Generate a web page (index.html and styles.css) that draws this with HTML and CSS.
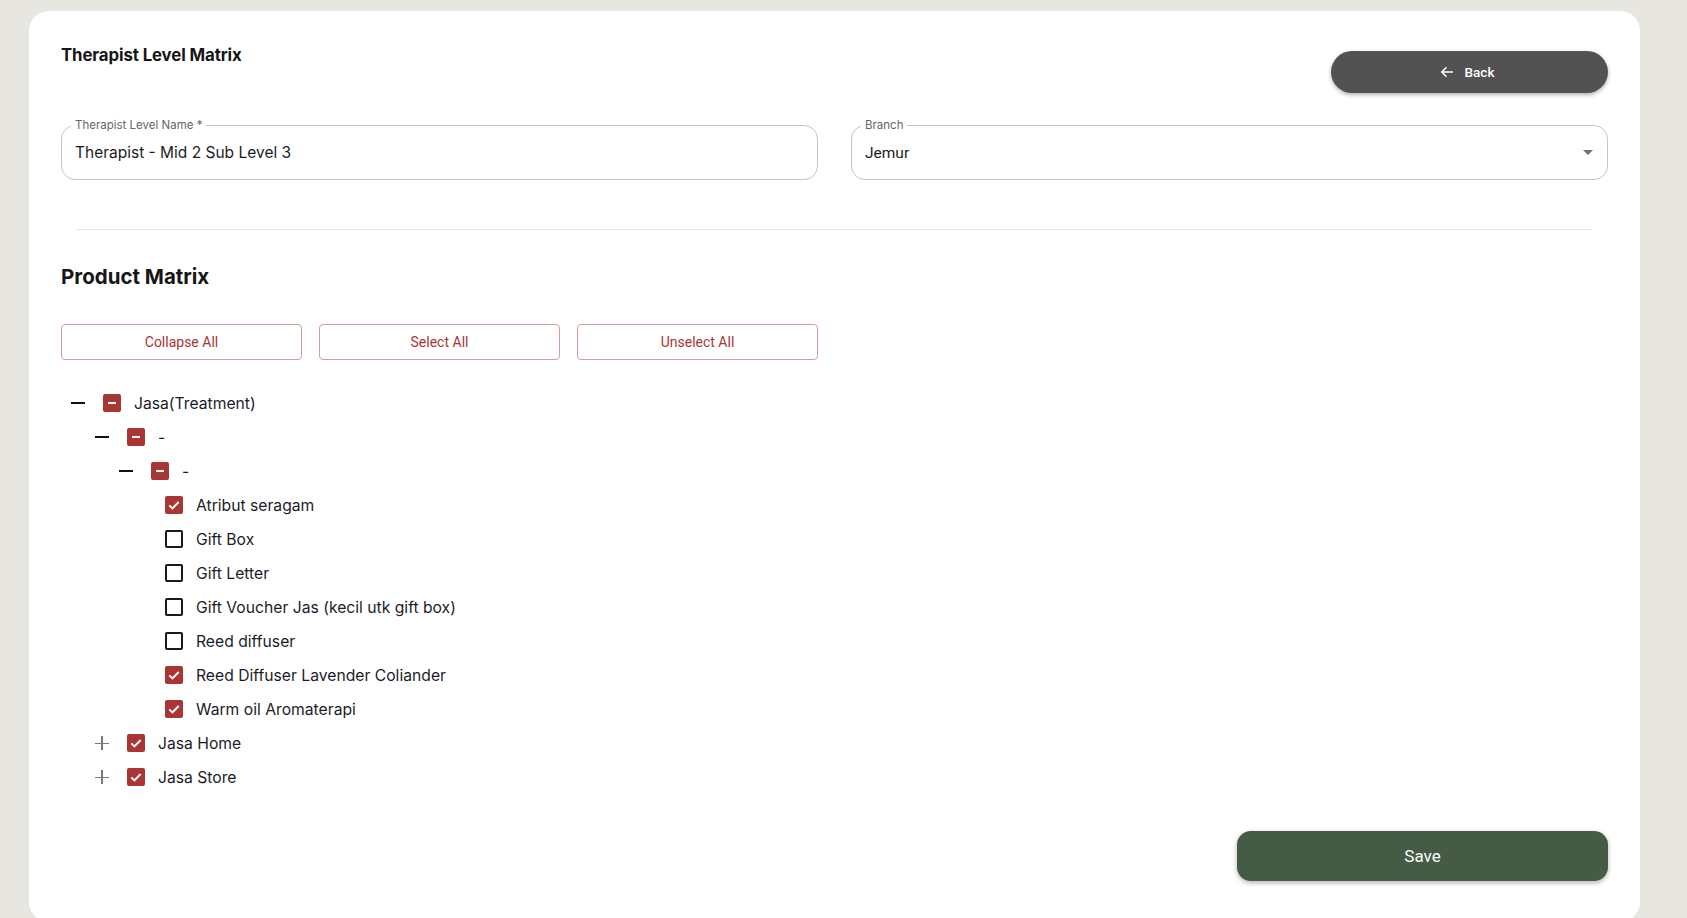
FILE: index.html
```html
<!DOCTYPE html>
<html lang="en">
<head>
    <meta charset="UTF-8">
    <meta name="viewport" content="width=device-width, initial-scale=1.0">
    <title>Therapist Level Matrix</title>
    <link rel="stylesheet" href="styles.css">
</head>
<body>
    <div class="page">
        <div class="card">
            <!-- Header -->
            <div class="header">
                <h1>Therapist Level Matrix</h1>
                <button class="back-btn">
                    <svg width="16" height="16" viewBox="0 0 16 16"><path d="M14 8H3M7.5 3.3L2.8 8l4.7 4.7" fill="none" stroke="#fff" stroke-width="1.5"/></svg>
                    Back
                </button>
            </div>

            <!-- Fields -->
            <div class="fields">
                <div class="field">
                    <label>Therapist Level Name *</label>
                    <span class="value">Therapist - Mid 2 Sub Level 3</span>
                </div>
                <div class="field select">
                    <label>Branch</label>
                    <span class="value">Jemur</span>
                    <span class="caret"></span>
                </div>
            </div>

            <hr class="divider">

            <h2>Product Matrix</h2>

            <div class="actions">
                <button class="outline-btn">Collapse All</button>
                <button class="outline-btn">Select All</button>
                <button class="outline-btn">Unselect All</button>
            </div>

            <!-- Tree -->
            <div class="tree">
                <div class="node lvl-0">
                    <span class="toggle minus"></span>
                    <span class="box partial"></span>
                    <span class="label">Jasa(Treatment)</span>
                </div>
                <div class="node lvl-1">
                    <span class="toggle minus"></span>
                    <span class="box partial"></span>
                    <span class="label">-</span>
                </div>
                <div class="node lvl-2">
                    <span class="toggle minus"></span>
                    <span class="box partial"></span>
                    <span class="label">-</span>
                </div>
                <div class="node leaf">
                    <span class="box checked"><svg width="18" height="18" viewBox="0 0 18 18"><path d="M4.3 9.4l3.1 3 6.3-6.4" fill="none" stroke="#fff" stroke-width="2"/></svg></span>
                    <span class="label">Atribut seragam</span>
                </div>
                <div class="node leaf">
                    <span class="box"></span>
                    <span class="label">Gift Box</span>
                </div>
                <div class="node leaf">
                    <span class="box"></span>
                    <span class="label">Gift Letter</span>
                </div>
                <div class="node leaf">
                    <span class="box"></span>
                    <span class="label">Gift Voucher Jas (kecil utk gift box)</span>
                </div>
                <div class="node leaf">
                    <span class="box"></span>
                    <span class="label">Reed diffuser</span>
                </div>
                <div class="node leaf">
                    <span class="box checked"><svg width="18" height="18" viewBox="0 0 18 18"><path d="M4.3 9.4l3.1 3 6.3-6.4" fill="none" stroke="#fff" stroke-width="2"/></svg></span>
                    <span class="label">Reed Diffuser Lavender Coliander</span>
                </div>
                <div class="node leaf">
                    <span class="box checked"><svg width="18" height="18" viewBox="0 0 18 18"><path d="M4.3 9.4l3.1 3 6.3-6.4" fill="none" stroke="#fff" stroke-width="2"/></svg></span>
                    <span class="label">Warm oil Aromaterapi</span>
                </div>
                <div class="node lvl-1">
                    <span class="toggle plus"></span>
                    <span class="box checked"><svg width="18" height="18" viewBox="0 0 18 18"><path d="M4.3 9.4l3.1 3 6.3-6.4" fill="none" stroke="#fff" stroke-width="2"/></svg></span>
                    <span class="label">Jasa Home</span>
                </div>
                <div class="node lvl-1">
                    <span class="toggle plus"></span>
                    <span class="box checked"><svg width="18" height="18" viewBox="0 0 18 18"><path d="M4.3 9.4l3.1 3 6.3-6.4" fill="none" stroke="#fff" stroke-width="2"/></svg></span>
                    <span class="label">Jasa Store</span>
                </div>
            </div>

            <div class="footer">
                <button class="save-btn">Save</button>
            </div>
        </div>
    </div>
</body>
</html>
```

FILE: styles.css
```css
/* Reset */
* {
    margin: 0;
    padding: 0;
    box-sizing: border-box;
}
body {
    font-family: 'Inter', sans-serif;
    background-color: #e8e6e0;
    color: #1c1c1c;
    height: 918px;
    overflow: hidden;
}
.page {
    padding: 11px 47px 0 29px;
}
.card {
    background-color: #ffffff;
    border-radius: 20px;
    height: 911px;
    padding: 32px 32px 0 32px;
}

/* Header */
.header {
    display: flex;
    justify-content: space-between;
    align-items: flex-start;
}
h1 {
    font-size: 16.8px;
    font-weight: 700;
    line-height: 24px;
    letter-spacing: -0.1px;
    color: #161616;
}
.back-btn {
    margin-top: 8px;
    width: 277px;
    height: 42px;
    border: none;
    border-radius: 21px;
    background-color: #525252;
    color: #ffffff;
    font-family: 'Roboto', sans-serif;
    font-size: 13.5px;
    font-weight: 500;
    display: flex;
    justify-content: center;
    align-items: center;
    gap: 10px;
    padding-right: 6px;
    box-shadow: 0 2px 4px rgba(0, 0, 0, 0.3);
}
.back-btn svg {
    margin-top: -1px;
}

/* Fields */
.fields {
    display: flex;
    gap: 33px;
    margin-top: 32px;
}
.field {
    flex: 1;
    position: relative;
    height: 55px;
    border: 1px solid #c4c4c4;
    border-radius: 14px;
    padding: 0 13px;
    display: flex;
    align-items: center;
}
.field label {
    position: absolute;
    top: -8px;
    left: 9px;
    padding: 0 4px;
    background-color: #ffffff;
    font-size: 11.5px;
    line-height: 14px;
    color: #666666;
}
.field .value {
    font-size: 15.5px;
    color: #1c1c1c;
}
.field.select .value {
    font-family: 'Roboto', sans-serif;
}
.caret {
    margin-left: auto;
    margin-right: 1px;
    width: 0;
    height: 0;
    border-left: 5px solid transparent;
    border-right: 5px solid transparent;
    border-top: 5px solid #707070;
}

.divider {
    border: none;
    border-top: 1px solid #e4e4e4;
    margin: 49px 15px 0 16px;
}

h2 {
    margin-top: 33px;
    font-size: 20.5px;
    font-weight: 700;
    line-height: 28px;
    color: #161616;
}

/* Buttons */
.actions {
    display: grid;
    grid-template-columns: repeat(3, 241px);
    gap: 17px;
    margin-top: 33px;
}
.outline-btn {
    height: 36px;
    background-color: #ffffff;
    border: 1px solid #d99a9a;
    border-radius: 4px;
    color: #a93535;
    font-family: 'Roboto', sans-serif;
    font-size: 14px;
}

/* Tree */
.tree {
    margin-top: 26px;
}
.node {
    display: flex;
    align-items: center;
    height: 34px;
    font-size: 15.7px;
    color: #1c1c28;
}
.lvl-0 { padding-left: 10px; }
.lvl-1 { padding-left: 34px; }
.lvl-2 { padding-left: 58px; }
.leaf { padding-left: 104px; }
.toggle {
    width: 32px;
    height: 14px;
    position: relative;
}
.toggle::before,
.toggle::after {
    content: '';
    position: absolute;
    background-color: #111111;
}
.toggle.minus::before {
    left: 0;
    top: 6px;
    width: 14px;
    height: 2px;
}
.toggle.minus::after {
    display: none;
}
.toggle.plus::before {
    left: 0;
    top: 6.5px;
    width: 14px;
    height: 1.5px;
    background-color: #7a7a7a;
}
.toggle.plus::after {
    left: 6.25px;
    top: 0;
    width: 1.5px;
    height: 14px;
    background-color: #7a7a7a;
}
.box {
    width: 18px;
    height: 18px;
    border: 2px solid #1a1a1a;
    border-radius: 2px;
    margin-right: 13px;
    flex-shrink: 0;
    display: flex;
    align-items: center;
    justify-content: center;
}
.box svg {
    display: block;
}
.box.checked,
.box.partial {
    border: none;
    background-color: #a93535;
}
.box.partial::before {
    content: '';
    width: 8px;
    height: 2.5px;
    background-color: #ffffff;
}

/* Footer */
.footer {
    display: flex;
    justify-content: flex-end;
    margin-top: 37px;
}
.save-btn {
    width: 371px;
    height: 50px;
    border: none;
    border-radius: 14px;
    background-color: #465b44;
    color: #ffffff;
    font-family: 'Roboto', sans-serif;
    font-size: 17px;
    box-shadow: 0 2px 5px rgba(0, 0, 0, 0.3);
}
```
